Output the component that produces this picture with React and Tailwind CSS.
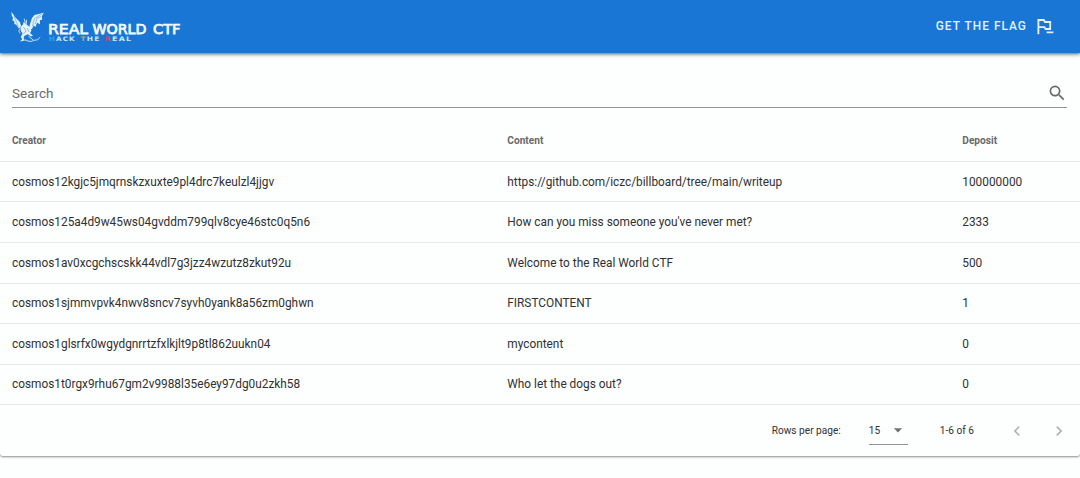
const ROWS = [
  ["cosmos12kgjc5jmqrnskzxuxte9pl4drc7keulzl4jjgv", "https://github.com/iczc/billboard/tree/main/writeup", "100000000"],
  ["cosmos125a4d9w45ws04gvddm799qlv8cye46stc0q5n6", "How can you miss someone you've never met?", "2333"],
  ["cosmos1av0xcgchscskk44vdl7g3jzz4wzutz8zkut92u", "Welcome to the Real World CTF", "500"],
  ["cosmos1sjmmvpvk4nwv8sncv7syvh0yank8a56zm0ghwn", "FIRSTCONTENT", "1"],
  ["cosmos1glsrfx0wgydgnrrtzfxlkjlt9p8tl862uukn04", "mycontent", "0"],
  ["cosmos1t0rgx9rhu67gm2v9988l35e6ey97dg0u2zkh58", "Who let the dogs out?", "0"],
];

const GRID = "grid grid-cols-[495.3px_455px_1fr] items-center pl-3";

function Icon({ d, className }) {
  return (
    <svg viewBox="0 0 24 24" className={className} fill="currentColor" aria-hidden="true">
      <path d={d} />
    </svg>
  );
}

function Logo() {
  return (
    <svg width="172" height="36" viewBox="10 9 172 36" role="img" aria-label="Real World CTF">
      {/* dragon */}
      <g fill="#e4f2fa">
        <path d="M30.5 22.5 L32 18 L34.5 15 L43.8 12.8 L41.8 16.3 L42.2 19.5 L39.9 20.3 L40 24.2 L37 22.8 L35.5 27 L33.5 25.5 L32 29 L30 29.5 L29 27.5 Z" />
        <path d="M11.5 11.7 L15 17 L20 22.3 L21 26 L19 28.8 L17.5 26.5 L16.3 24.8 L14.4 24 L14.4 21.5 L12.4 20.3 L13 18 L11.7 15.5 Z" />
        <path d="M20.5 27 L23 24.5 L23.5 22 L25.5 23.5 L28.5 26 L31.5 30.5 L30 33.2 L33 35.6 L31 36.4 L28 34.2 L24.5 35.8 L23.5 38 L25 40.5 L19.8 41.4 L22.2 39.2 L20.8 37 L22.5 33.5 L20.8 30.8 Z" />
      </g>
      <path d="M24.2 18.7 L25.3 23 M26.6 19.8 L26.2 24 M25 39.8 Q31 42.7 33.5 40.4 Q38 40.8 40.2 37.2 M28.5 36.2 L33.2 40" fill="none" stroke="#d8eef8" strokeWidth=".9" />
      <path d="M32.5 26 L34.5 18.5 L42 14 M35.3 24 L37 18.5 L41 16.5 M14 16 L18.5 27 M23.5 27 L26 31 L23.5 34 M27 28 L29 32" fill="none" stroke="#62a8e2" strokeWidth=".7" />
      <path d="M20.2 28.5 L18.8 31 L20.2 33.5" fill="none" stroke="#dda58f" strokeWidth="1.3" />
      <g fontFamily="'DejaVu Sans', sans-serif" fill="#f4fbff" stroke="#f4fbff" strokeWidth=".75">
        <text x="48" y="33.8" fontSize="14.2" textLength="40" lengthAdjust="spacingAndGlyphs">REAL</text>
        <text x="92.5" y="33.8" fontSize="14.2" textLength="54" lengthAdjust="spacingAndGlyphs">WORLD</text>
        <text x="153" y="33.8" fontSize="14.2" textLength="27.5" lengthAdjust="spacingAndGlyphs">CTF</text>
      </g>
      <g fontFamily="'DejaVu Sans', sans-serif" fontWeight="bold" fontSize="6.2" letterSpacing="1" fill="#cfe6f8">
        <text x="48.8" y="41.3" textLength="27" lengthAdjust="spacingAndGlyphs"><tspan fill="#28a5e6">H</tspan>ACK</text>
        <text x="80.5" y="41.3" textLength="20" lengthAdjust="spacingAndGlyphs"><tspan fill="#b6a273">T</tspan>HE</text>
        <text x="104.5" y="41.3" textLength="28" lengthAdjust="spacingAndGlyphs"><tspan fill="#d2485f">R</tspan>EAL</text>
      </g>
    </svg>
  );
}

export default function App() {
  return (
    <div className="h-[478px] overflow-hidden bg-[#fdfefe] font-['Roboto',sans-serif] text-[11.85px] text-[#303132]">
      <header className="relative flex h-[53px] items-center justify-between bg-[#1976d5] pl-2.5 pr-[25px] shadow-[0_1px_3px_rgba(0,0,0,0.5),0_2px_5px_rgba(0,0,0,0.16)]">
        <Logo />
        <button className="flex items-center pt-px text-[11.85px] font-medium tracking-[1.06px] text-[#e6f1fb]">
          <span>GET THE FLAG</span>
          <svg viewBox="0 0 20 20" className="ml-2 size-5" fill="none" stroke="currentColor" strokeWidth="1.8" aria-hidden="true">
            <path d="M3.4 17.2 V3 H8.9 L9.9 5 H15.2 V12 H10.6 L9.4 10.2 H3.4 M11.6 15.4 H18.4" />
          </svg>
        </button>
      </header>

      <main className="h-[402.5px] rounded-b-[3px] bg-[#fdfefe] shadow-[0_1px_2px_rgba(0,0,0,0.36),0_1px_3px_rgba(0,0,0,0.12)]">
        <div className="pl-3 pr-[13px] pt-[26px]">
          <div className="flex h-[29px] items-center justify-between border-b border-[#929394] text-[#6a6b6c]">
            <span className="text-[13.5px] leading-5">Search</span>
            <Icon className="size-[20.3px]" d="M9.5,3A6.5,6.5 0 0,1 16,9.5C16,11.11 15.41,12.59 14.44,13.73L14.71,14H15.5L20.5,19L19,20.5L14,15.5V14.71L13.73,14.44C12.59,15.41 11.11,16 9.5,16A6.5,6.5 0 0,1 3,9.5A6.5,6.5 0 0,1 9.5,3M9.5,5C7,5 5,7 5,9.5C5,12 7,14 9.5,14C12,14 14,12 14,9.5C14,7 12,5 9.5,5Z" />
          </div>
        </div>

        <div role="table" className="pt-[13.3px]">
          <div role="row" className={`${GRID} h-[40.6px] border-b border-[#e6e8e9] text-[10.15px] font-bold text-[#69696a]`}>
            <span>Creator</span>
            <span>Content</span>
            <span>Deposit</span>
          </div>
          {ROWS.map(([creator, content, deposit]) => (
            <div role="row" key={creator} className={`${GRID} h-[40.6px] border-b border-[#e6e8e9] pt-[1.4px]`}>
              <span>{creator}</span>
              <span>{content}</span>
              <span>{deposit}</span>
            </div>
          ))}
        </div>

        <footer className="flex h-[50px] items-center justify-end pr-[11px] pt-px text-[10.15px]">
          <span>Rows per page:</span>
          <div className="ml-7 flex h-7 w-[39px] items-center justify-between border-b border-[#929394]">
            <span>15</span>
            <Icon className="size-5 text-[#707172]" d="M7,10L12,15L17,10H7Z" />
          </div>
          <span className="ml-8">1-6 of 6</span>
          <div className="ml-[33px] flex gap-[22px] text-[#b2b3b4]">
            <Icon className="size-5" d="M15.41,16.58L10.83,12L15.41,7.41L14,6L8,12L14,18L15.41,16.58Z" />
            <Icon className="size-5" d="M8.59,16.58L13.17,12L8.59,7.41L10,6L16,12L10,18L8.59,16.58Z" />
          </div>
        </footer>
      </main>
    </div>
  );
}
